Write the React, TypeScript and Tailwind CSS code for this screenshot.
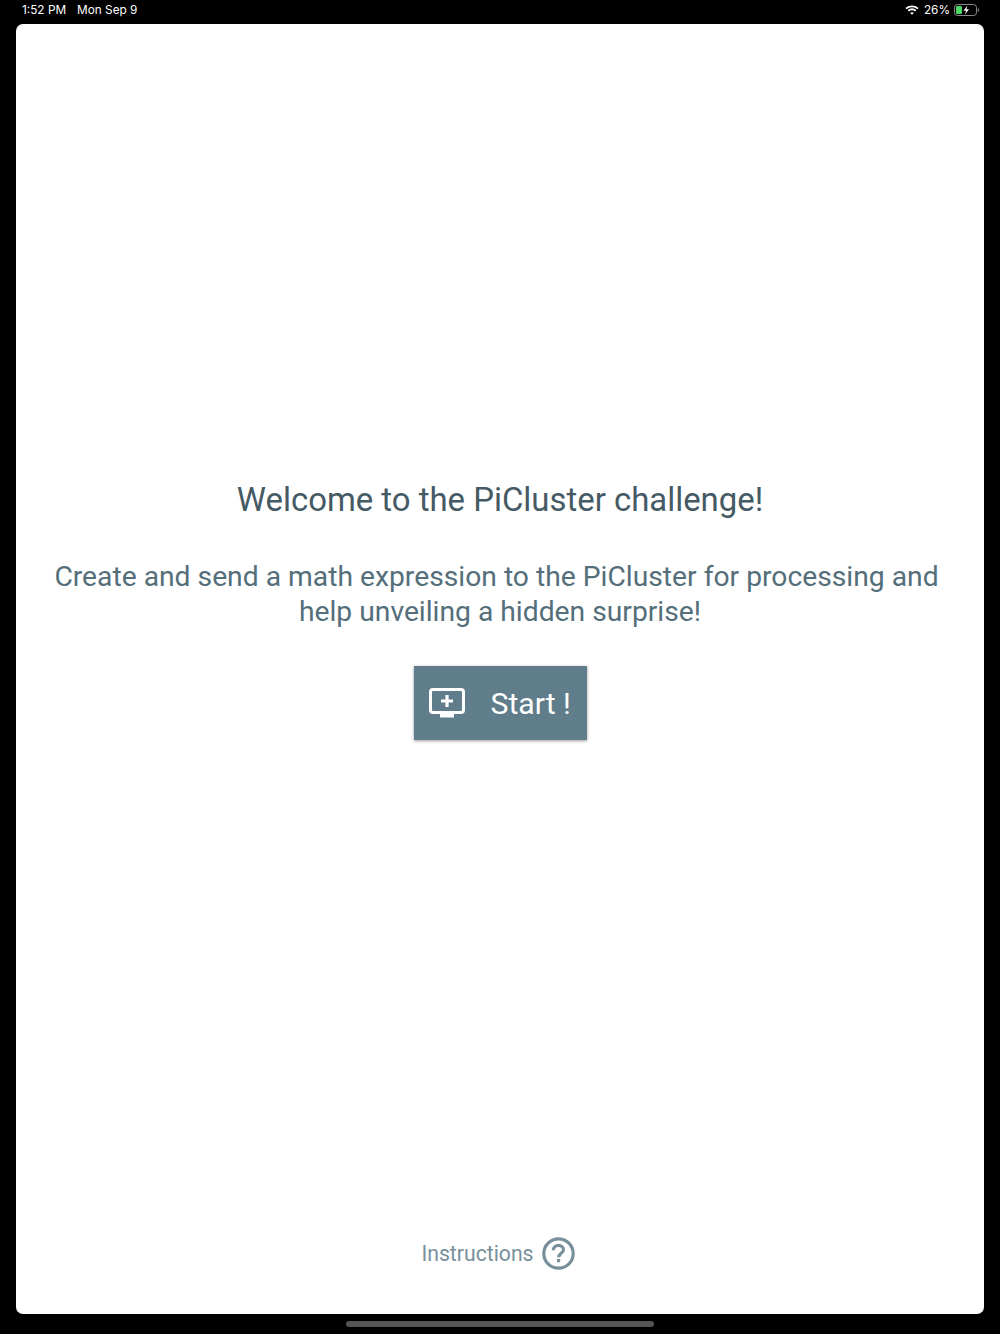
const roboto = { fontFamily: "Roboto, sans-serif" };

const WifiIcon = () => (
  <svg width="14" height="10" viewBox="0 0 14 10" fill="none" stroke="#fff" strokeWidth="1.8">
    <path d="M1 3.6C4.4.7 9.6.7 13 3.6" />
    <path d="M3.2 5.8c2.2-1.8 5.4-1.8 7.6 0" />
    <path d="M7 9.8 5.1 7.8c1.1-.8 2.7-.8 3.8 0Z" fill="#fff" stroke="none" />
  </svg>
);

const BatteryIcon = () => (
  <svg width="25" height="12" viewBox="0 0 25 12" fill="none">
    <rect x="0.5" y="0.5" width="22" height="11" rx="3" stroke="#8a8a8a" />
    <rect x="2" y="2" width="6" height="8" rx="1.3" fill="#4cd964" />
    <path d="M23.8 4v4c.7-.2 1.2-1 1.2-2s-.5-1.8-1.2-2Z" fill="#8a8a8a" />
    <path d="M13.5 1.5 9.5 6.8h2.6L11 10.5l4-5.3h-2.6l1.1-3.7Z" fill="#fff" />
  </svg>
);

const MonitorPlusIcon = () => (
  <svg width="36" height="30" viewBox="0 0 36 30" fill="none">
    <rect x="1.5" y="1.5" width="33" height="23" rx="2.5" stroke="#fff" strokeWidth="3" />
    <path d="M11 26h14v3.5H11z" fill="#fff" />
    <path d="M18 7v12M12 13h12" stroke="#fff" strokeWidth="3.2" />
  </svg>
);

const HelpIcon = () => (
  <svg width="33" height="33" viewBox="0 0 33 33" fill="none">
    <circle cx="16.5" cy="16.5" r="14.7" stroke="#78909c" strokeWidth="3.2" />
    <path
      d="M11.4 13.2c0-2.8 2.2-4.8 5.1-4.8s5 1.8 5 4.3c0 3.5-4.8 3.7-4.8 7.5"
      stroke="#78909c"
      strokeWidth="3.2"
    />
    <rect x="15" y="22" width="3.2" height="3.2" fill="#78909c" />
  </svg>
);

export default function App() {
  return (
    <div className="w-[1000px] h-[1334px] bg-black flex flex-col" style={roboto}>
      {/* Status bar */}
      <div className="h-6 flex justify-between items-start pl-[22px] pr-[21px] pt-[3px] text-white text-[11.8px] leading-[14px]">
        <div className="flex gap-[11px]" style={{ fontFamily: "Inter, sans-serif" }}>
          <span>1:52 PM</span>
          <span>Mon Sep 9</span>
        </div>
        <div className="flex items-center gap-[6px]" style={{ fontFamily: "Inter, sans-serif" }}>
          <div className="mr-[-1px]">
            <WifiIcon />
          </div>
          <span className="mr-[-2px]">26%</span>
          <BatteryIcon />
        </div>
      </div>

      {/* Main card */}
      <div className="mx-4 h-[1290px] bg-white rounded-[7px] flex flex-col items-center">
        <h1 className="mt-[457px] text-[32.9px] leading-[38px] text-[#455a64]">
          Welcome to the PiCluster challenge!
        </h1>
        <p className="mt-[40px] w-[900px] text-center text-[28.25px] leading-[35px] text-[#546e7a]">
          <span className="block pr-[7px]">Create and send a math expression to the PiCluster for processing and</span>
          <span className="block">help unveiling a hidden surprise!</span>
        </p>
        <button className="mt-[37px] w-[173px] h-[74px] bg-[#607d8b] text-white flex items-center pl-[15px] shadow-[0_1px_3px_rgba(0,0,0,0.4)]">
          <MonitorPlusIcon />
          <span className="ml-[26px] pt-[1px] text-[30.2px] leading-[38px]">Start !</span>
        </button>
        <div className="mt-auto mb-[44px] mr-[4px] flex items-center gap-[8px] text-[#78909c]">
          <span className="text-[21.2px] leading-[26px]">Instructions</span>
          <HelpIcon />
        </div>
      </div>

      {/* Home indicator */}
      <div className="flex-1 flex justify-center items-start pt-[7px]">
        <div className="w-[308px] h-[6px] rounded-full bg-[#555]" />
      </div>
    </div>
  );
}
